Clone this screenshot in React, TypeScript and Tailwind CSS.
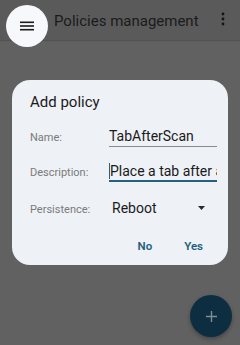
import React from "react";

function MenuIcon() {
  return (
    <svg width="14" height="10" viewBox="0 0 14 10" fill="none">
      <rect x="0" y="0.5" width="14" height="1.6" fill="#1b1b1b" />
      <rect x="0" y="4.2" width="14" height="1.6" fill="#1b1b1b" />
      <rect x="0" y="7.9" width="14" height="1.6" fill="#1b1b1b" />
    </svg>
  );
}

function MoreIcon() {
  return (
    <svg width="4" height="14" viewBox="0 0 4 14" fill="#141414">
      <circle cx="2" cy="2" r="1.4" />
      <circle cx="2" cy="7" r="1.4" />
      <circle cx="2" cy="12" r="1.4" />
    </svg>
  );
}

export default function App() {
  return (
    <div
      className="relative h-[345px] w-[240px] overflow-hidden bg-[#616161]"
      style={{ fontFamily: "Roboto, 'Liberation Sans', sans-serif" }}
    >
      <header className="flex h-[40px] items-start bg-[#5a5a5a] shadow-[0_1px_1px_rgba(0,0,0,0.15)]">
        <button className="ml-[6px] mt-[5px] flex h-[42px] w-[42px] shrink-0 items-center justify-center rounded-full bg-[#f7f8fc]">
          <MenuIcon />
        </button>
        <h1 className="ml-[6px] mt-[11px] text-[15px] leading-[20px] text-[#1b1b1b]">Policies management</h1>
        <div className="ml-auto mr-[15px] mt-[12px]">
          <MoreIcon />
        </div>
      </header>

      <div className="mx-[12px] mt-[40px] h-[185px] rounded-[18px] bg-[#eef1f6] pl-[18px] pr-[11px] pt-[12px]">
        <h2 className="text-[15px] leading-[20px] text-[#1a1a1a]">Add policy</h2>

        <div className="mt-[15px] flex items-baseline">
          <span className="w-[79px] shrink-0 text-[11px] leading-[14px] text-[#7a7a7a]">Name:</span>
          <div className="flex-1 border-b-[1.5px] border-[#8a8a8a] pb-[1px] text-[14px] leading-[18px] text-[#1a1a1a]">
            TabAfterScan
          </div>
        </div>

        <div className="mt-[15px] flex items-baseline">
          <span className="w-[79px] shrink-0 text-[11px] leading-[14px] text-[#7a7a7a]">Description:</span>
          <div className="relative min-w-0 flex-1 overflow-hidden whitespace-nowrap border-b-2 border-[#28607f] pl-[1px] text-[14px] leading-[18px] text-[#1a1a1a]">
            <span className="absolute left-0 top-[1px] h-[16px] w-[1px] bg-[#28607f]" />
            Place a tab after a scan
          </div>
        </div>

        <div className="mt-[17px] flex items-baseline">
          <span className="w-[82px] shrink-0 text-[11px] leading-[14px] text-[#7a7a7a]">Persistence:</span>
          <span className="text-[14px] leading-[18px] text-[#1a1a1a]">Reboot</span>
          <svg className="ml-auto mr-[12px] self-center" width="7" height="4" viewBox="0 0 7 4">
            <path d="M0 0h7L3.5 4z" fill="#2a2a2a" />
          </svg>
        </div>

        <div className="mt-[22px] flex justify-end gap-[32px] pr-[14px] text-[11.5px] font-semibold leading-[14px] text-[#23607f]">
          <button>No</button>
          <button>Yes</button>
        </div>
      </div>

      <button className="absolute left-[190px] top-[295px] flex h-[42px] w-[42px] items-center justify-center rounded-full bg-[#0c2e40] shadow-[0_2px_4px_rgba(0,0,0,0.3)]">
        <svg width="11" height="11" viewBox="0 0 11 11">
          <path d="M5.5 0v11M0 5.5h11" stroke="#7f8d93" strokeWidth="1.4" />
        </svg>
      </button>
    </div>
  );
}
